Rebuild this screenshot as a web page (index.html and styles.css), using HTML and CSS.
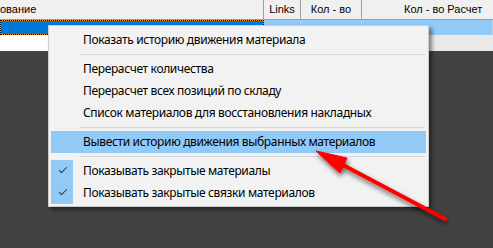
FILE: index.html
```html
<!DOCTYPE html>
<html lang="ru">
  <head>
    <meta charset="UTF-8" />
    <meta name="viewport" content="width=device-width, initial-scale=1.0" />
    <title>Материалы</title>
    <link rel="stylesheet" href="styles.css">
  </head>
  <body>
    <div class="grid">
      <div class="head">
        <div class="cell name">ование</div>
        <div class="cell center">Links</div>
        <div class="cell center">Кол - во</div>
        <div class="cell calc">Кол - во Расчет</div>
      </div>
      <div class="row selected">
        <div class="cell focus"></div>
        <div class="cell"></div>
        <div class="cell mark"></div>
        <div class="cell"></div>
      </div>
      <div class="row plain">
        <div class="cell white"></div>
        <div class="cell"></div>
        <div class="cell"></div>
        <div class="cell"></div>
      </div>
    </div>

    <ul class="menu">
      <li class="item">Показать историю движения материала</li>
      <li class="sep"></li>
      <li class="item">Перерасчет количества</li>
      <li class="item">Перерасчет всех позиций по складу</li>
      <li class="item">Список материалов для восстановления накладных</li>
      <li class="sep"></li>
      <li class="item hover">Вывести историю движения выбранных материалов</li>
      <li class="sep"></li>
      <li class="item checked">Показывать закрытые материалы</li>
      <li class="item checked">Показывать закрытые связки материалов</li>
    </ul>

    <svg class="arrow" width="493" height="248" viewBox="0 0 493 248">
      <defs>
        <filter id="shadow" x="-20%" y="-20%" width="140%" height="140%">
          <feDropShadow dx="1" dy="3" stdDeviation="2.5" flood-color="#000" flood-opacity="0.6" />
        </filter>
      </defs>
      <g filter="url(#shadow)" fill="#ff0000" stroke="#ff0000">
        <line x1="343" y1="165" x2="445" y2="219" stroke-width="4" stroke-linecap="round" />
        <polygon points="316,151 340,173 347,158" stroke-width="1" stroke-linejoin="round" />
      </g>
    </svg>
  </body>
</html>
```

FILE: styles.css
```css
* {
  box-sizing: border-box;
}

body {
  margin: 0;
  width: 493px;
  height: 248px;
  overflow: hidden;
  background-color: #424242;
  font-family: "Liberation Sans", Arial, sans-serif;
  position: relative;
}

.grid {
  display: flex;
  flex-direction: column;
}

.head,
.row {
  display: grid;
  grid-template-columns: 264px 37px 61px 1fr;
}

.head {
  height: 20px;
  background-color: #f0f0f0;
  border-bottom: 1px solid #a0a0a0;
  font-size: 11px;
  color: #000;
}

.head .cell {
  border-right: 1px solid #a0a0a0;
  line-height: 19px;
  white-space: nowrap;
  overflow: hidden;
}

.head .center {
  text-align: center;
}

.head .calc {
  padding-left: 42px;
  border-right: 0;
}

.row.selected {
  height: 15px;
  background-color: #91c9f7;
}

.row.selected .cell {
  border-right: 1px solid #b7d6ee;
}

.row.selected .focus {
  border: 1px dotted #000;
  background: linear-gradient(#0078d7, #0078d7) padding-box,
    linear-gradient(#f7941d, #f7941d) border-box;
}

.row.selected .mark {
  position: relative;
}

.row.selected .mark::after {
  content: "";
  position: absolute;
  right: 5px;
  bottom: 2px;
  border-left: 3px solid transparent;
  border-bottom: 3px solid #222;
}

.row.plain {
  height: 16px;
  background-color: #e9e9e9;
}

.row.plain .white {
  background-color: #fff;
}

.menu {
  position: absolute;
  left: 48px;
  top: 25px;
  width: 381px;
  margin: 0;
  padding: 3px 2px 2px;
  list-style: none;
  background-color: #f2f2f2;
  border: 1px solid #cccccc;
  box-shadow: 3px 3px 4px rgba(0, 0, 0, 0.45);
  font-family: "Noto Sans", "Open Sans", sans-serif;
  font-size: 12px;
  letter-spacing: -0.35px;
  color: #000;
}

.menu .item {
  height: 22px;
  line-height: 22px;
  padding-left: 32px;
  white-space: nowrap;
  position: relative;
}

.menu .item.hover {
  background-color: #91c9f7;
}

.menu .item.checked::before {
  content: "";
  position: absolute;
  left: 0;
  top: 0;
  width: 22px;
  height: 22px;
  background-color: #91c9f7;
}

.menu .item.checked::after {
  content: "";
  position: absolute;
  left: 8px;
  top: 7px;
  width: 7px;
  height: 3px;
  border-left: 1.5px solid #333;
  border-bottom: 1.5px solid #333;
  transform: rotate(-45deg);
}

.menu .sep {
  height: 7px;
  margin-left: 28px;
  margin-right: 1px;
  padding-top: 3px;
}

.menu .sep::before {
  content: "";
  display: block;
  height: 1px;
  background-color: #d7d7d7;
}

.arrow {
  position: absolute;
  left: 0;
  top: 0;
  pointer-events: none;
}
```
